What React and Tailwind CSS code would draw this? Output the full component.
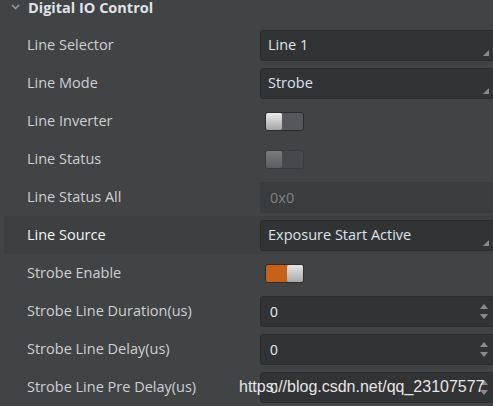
import React from 'react'

const font = { fontFamily: '"Open Sans", "Noto Sans", sans-serif' }

const Select = ({ value }) => (
  <div className="relative h-[31px] w-[234px] shrink-0 rounded-[3px] border border-[#2c2d2f] bg-[#323335] pl-[7px] text-[14.5px] leading-[28px] text-[#dde3ea]">
    {value}
    <div className="absolute bottom-[4px] right-[4px] h-0 w-0 border-b-[6px] border-l-[6px] border-b-[#8a8b8d] border-l-transparent" />
  </div>
)

const Spin = ({ value }) => (
  <div className="relative h-[31px] w-[234px] shrink-0 rounded-[3px] border border-[#2c2d2f] bg-[#323335] pl-[9px] text-[14px] leading-[30px] text-[#dde3ea]">
    <span style={{ fontFamily: '"Liberation Sans", sans-serif' }}>{value}</span>
    <div className="absolute right-[5px] top-[7px] h-0 w-0 border-b-[5px] border-l-[4px] border-r-[4px] border-b-[#8a8b8d] border-l-transparent border-r-transparent" />
    <div className="absolute bottom-[7px] right-[5px] h-0 w-0 border-t-[5px] border-l-[4px] border-r-[4px] border-t-[#8a8b8d] border-l-transparent border-r-transparent" />
  </div>
)

const Disabled = ({ value }) => (
  <div className="h-[31px] w-[234px] shrink-0 rounded-[3px] border border-[#3a3b3d] bg-[#3b3c3e] pl-[9px] text-[14.5px] leading-[29px] text-[#7e8083]">
    {value}
  </div>
)

const Toggle = ({ on, disabled }) => (
  <div
    className={
      'ml-[5px] flex h-[19px] w-[39px] shrink-0 rounded-[3px] border ' +
      (on
        ? 'border-[#2c2d2f] bg-[#c4611a]'
        : disabled
        ? 'border-[#3a3b3d] bg-[#47484b]'
        : 'border-[#2a2b2d] bg-[#55575a]')
    }
  >
    <div
      className={
        'h-full w-[16px] rounded-[2px] ' +
        (on ? 'ml-auto bg-gradient-to-b from-[#e6e6e6] to-[#a9a9a9]' : disabled ? 'bg-gradient-to-b from-[#7a7b7d] to-[#5c5d60]' : 'bg-gradient-to-b from-[#ececec] to-[#a5a5a5]')
      }
    />
  </div>
)

const rows = [
  ['Line Selector', <Select value="Line 1" />],
  ['Line Mode', <Select value="Strobe" />],
  ['Line Inverter', <Toggle />],
  ['Line Status', <Toggle disabled />],
  ['Line Status All', <Disabled value="0x0" />],
  ['Line Source', <Select value="Exposure Start Active" />, true],
  ['Strobe Enable', <Toggle on />],
  ['Strobe Line Duration(us)', <Spin value="0" />],
  ['Strobe Line Delay(us)', <Spin value="0" />],
  ['Strobe Line Pre Delay(us)', <Spin value="0" />],
]

const App = () => {
  return (
    <div className="relative h-[406px] w-[493px] overflow-hidden bg-[#424345]" style={font}>
      <div className="flex h-[26px] items-start">
        <svg className="ml-[11px] mt-[4px]" width="9" height="6" viewBox="0 0 9 6">
          <path d="M1 1 L4.5 4.5 L8 1" stroke="#9a9b9d" strokeWidth="1.5" fill="none" />
        </svg>
        <span className="ml-[8px] text-[14.5px] font-bold leading-[15px] text-[#dfe3e8]">Digital IO Control</span>
      </div>
      {rows.map(([label, control, active]) => (
        <div key={label} className={'flex h-[38px] items-center ' + (active ? 'ml-[4px] bg-[#3e3f41]' : '')}>
          <div className={'shrink-0 text-[14.5px] ' + (active ? 'w-[256px] pl-[23px] text-[#f2f4f7]' : 'w-[260px] pl-[27px] text-[#cdd0d4]')}>
            {label}
          </div>
          {control}
        </div>
      ))}
      <div
        className="absolute left-[239px] top-[377px] text-[16px] leading-[20px] text-[#e6e6e6]"
        style={{ fontFamily: '"Liberation Sans", sans-serif' }}
      >
        https://blog.csdn.net/qq_23107577
      </div>
    </div>
  )
}

export default App
